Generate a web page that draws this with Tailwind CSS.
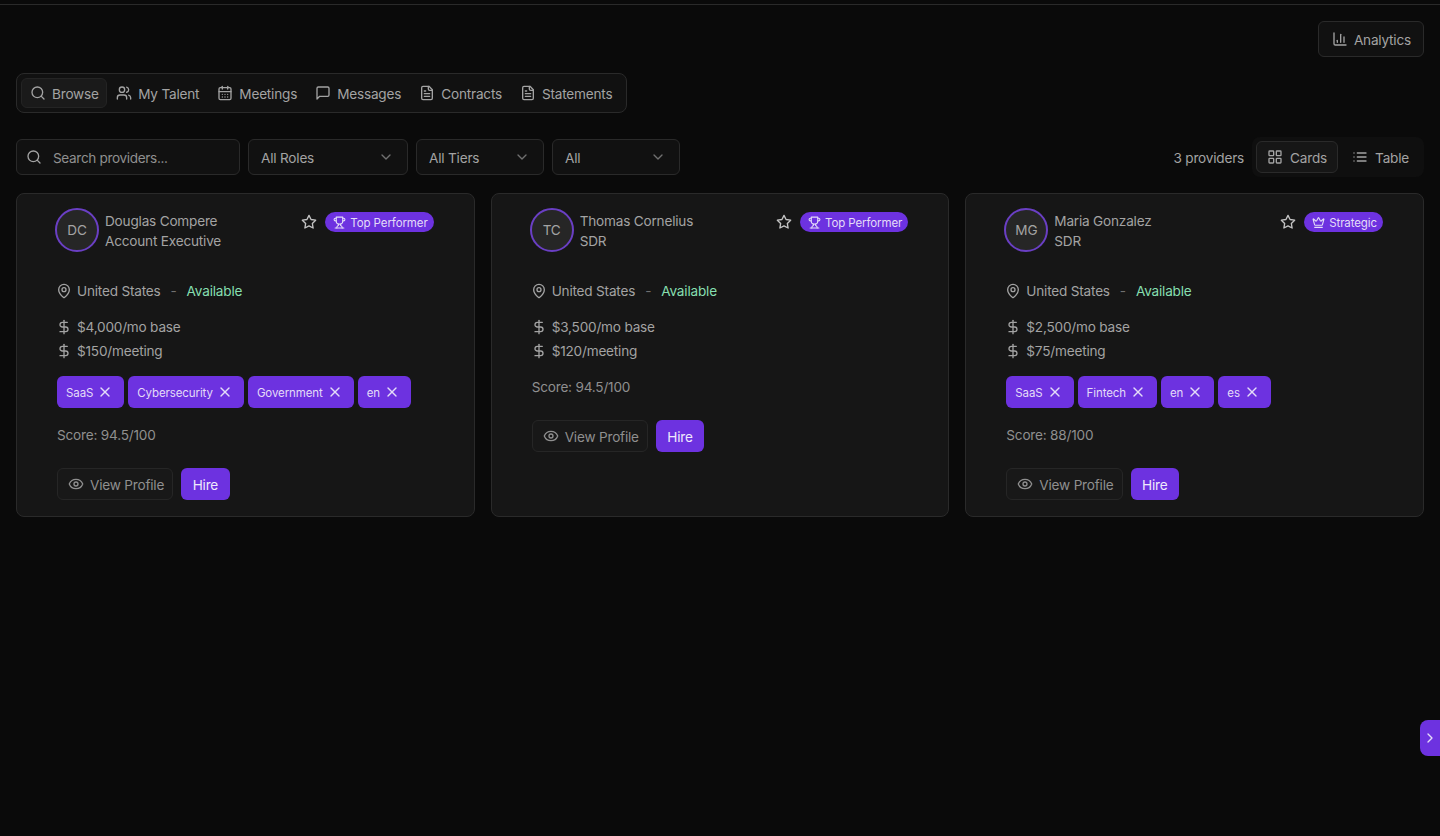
<!DOCTYPE html>
<html lang="en">
  <head>
    <meta charset="UTF-8" />
    <meta name="viewport" content="width=device-width, initial-scale=1.0" />
    <title>Browse providers</title>
    <script src="https://cdn.jsdelivr.net/npm/@tailwindcss/browser@4"></script>
  </head>
  <body class="bg-[#0a0a0a] min-h-screen overflow-hidden font-['Inter',sans-serif] text-[13.6px] tracking-[-0.2px] text-[#a3a3a3]">
    <div id="app"></div>

    <script>
      // Lucide icon bodies
      const icons = {
        search: '<circle cx="11" cy="11" r="8"/><path d="m21 21-4.3-4.3"/>',
        users: '<path d="M16 21v-2a4 4 0 0 0-4-4H6a4 4 0 0 0-4 4v2"/><circle cx="9" cy="7" r="4"/><path d="M22 21v-2a4 4 0 0 0-3-3.87"/><path d="M16 3.13a4 4 0 0 1 0 7.75"/>',
        calendar: '<path d="M8 2v4"/><path d="M16 2v4"/><rect width="18" height="18" x="3" y="4" rx="2"/><path d="M3 10h18"/><path d="M8 14h.01"/><path d="M12 14h.01"/><path d="M16 14h.01"/><path d="M8 18h.01"/><path d="M12 18h.01"/><path d="M16 18h.01"/>',
        message: '<path d="M21 15a2 2 0 0 1-2 2H7l-4 4V5a2 2 0 0 1 2-2h14a2 2 0 0 1 2 2z"/>',
        file: '<path d="M15 2H6a2 2 0 0 0-2 2v16a2 2 0 0 0 2 2h12a2 2 0 0 0 2-2V7Z"/><path d="M14 2v4a2 2 0 0 0 2 2h4"/><path d="M10 9H8"/><path d="M16 13H8"/><path d="M16 17H8"/>',
        chart: '<path d="M3 3v16a2 2 0 0 0 2 2h16"/><path d="M18 17V9"/><path d="M13 17V5"/><path d="M8 17v-3"/>',
        grid: '<rect width="7" height="7" x="3" y="3" rx="1"/><rect width="7" height="7" x="14" y="3" rx="1"/><rect width="7" height="7" x="14" y="14" rx="1"/><rect width="7" height="7" x="3" y="14" rx="1"/>',
        list: '<path d="M3 12h.01"/><path d="M3 18h.01"/><path d="M3 6h.01"/><path d="M8 12h13"/><path d="M8 18h13"/><path d="M8 6h13"/>',
        chevronDown: '<path d="m6 9 6 6 6-6"/>',
        chevronRight: '<path d="m9 18 6-6-6-6"/>',
        star: '<polygon points="12 2 15.09 8.26 22 9.27 17 14.14 18.18 21.02 12 17.77 5.82 21.02 7 14.14 2 9.27 8.91 8.26 12 2"/>',
        trophy: '<path d="M6 9H4.5a2.5 2.5 0 0 1 0-5H6"/><path d="M18 9h1.5a2.5 2.5 0 0 0 0-5H18"/><path d="M4 22h16"/><path d="M10 14.66V17c0 .55-.47.98-.97 1.21C7.85 18.75 7 20.24 7 22"/><path d="M14 14.66V17c0 .55.47.98.97 1.21C16.15 18.75 17 20.24 17 22"/><path d="M18 2H6v7a6 6 0 0 0 12 0V2Z"/>',
        crown: '<path d="M11.562 3.266a.5.5 0 0 1 .876 0L15.39 8.87a1 1 0 0 0 1.516.294L21.183 5.5a.5.5 0 0 1 .798.519l-2.834 10.246a1 1 0 0 1-.956.734H5.81a1 1 0 0 1-.957-.734L2.02 6.02a.5.5 0 0 1 .798-.519l4.276 3.664a1 1 0 0 0 1.516-.294z"/><path d="M5 21h14"/>',
        pin: '<path d="M20 10c0 4.993-5.539 10.193-7.399 11.799a1 1 0 0 1-1.202 0C9.539 20.193 4 14.993 4 10a8 8 0 0 1 16 0"/><circle cx="12" cy="10" r="3"/>',
        dollar: '<line x1="12" x2="12" y1="2" y2="22"/><path d="M17 5H9.5a3.5 3.5 0 0 0 0 7h5a3.5 3.5 0 0 1 0 7H6"/>',
        eye: '<path d="M2.062 12.348a1 1 0 0 1 0-.696 10.75 10.75 0 0 1 19.876 0 1 1 0 0 1 0 .696 10.75 10.75 0 0 1-19.876 0"/><circle cx="12" cy="12" r="3"/>',
        x: '<path d="M18 6 6 18"/><path d="m6 6 12 12"/>',
      };

      function icon(name, cls) {
        return `<svg xmlns="http://www.w3.org/2000/svg" viewBox="0 0 24 24" fill="none" stroke="currentColor" stroke-width="2" stroke-linecap="round" stroke-linejoin="round" class="shrink-0 ${cls}">${icons[name]}</svg>`;
      }

      // Mock Data
      const tabs = [
        { label: "Browse", icon: "search", active: true },
        { label: "My Talent", icon: "users" },
        { label: "Meetings", icon: "calendar" },
        { label: "Messages", icon: "message" },
        { label: "Contracts", icon: "file" },
        { label: "Statements", icon: "file" },
      ];

      const providers = [
        {
          initials: "DC",
          name: "Douglas Compere",
          role: "Account Executive",
          tier: "Top Performer",
          tierIcon: "trophy",
          base: "$4,000/mo base",
          meeting: "$150/meeting",
          tags: ["SaaS", "Cybersecurity", "Government", "en"],
          score: "94.5",
        },
        {
          initials: "TC",
          name: "Thomas Cornelius",
          role: "SDR",
          tier: "Top Performer",
          tierIcon: "trophy",
          base: "$3,500/mo base",
          meeting: "$120/meeting",
          tags: [],
          score: "94.5",
        },
        {
          initials: "MG",
          name: "Maria Gonzalez",
          role: "SDR",
          tier: "Strategic",
          tierIcon: "crown",
          base: "$2,500/mo base",
          meeting: "$75/meeting",
          tags: ["SaaS", "Fintech", "en", "es"],
          score: "88",
        },
      ];

      function renderTabs() {
        return `
          <nav class="flex w-fit h-10 items-center gap-[-1px] rounded-lg border border-[#2a2a2a] bg-[#111111] pl-1 pr-[5px]">
            ${tabs
              .map(
                (tab) => `
                <button class="flex h-[30px] items-center gap-[6px] rounded-md border px-2 ${
                  tab.active ? "border-[#242424] bg-[#1a1a1a] pr-[7.5px]" : "border-transparent"
                }">
                  ${icon(tab.icon, "size-4")}
                  <span class="pt-[2px]">${tab.label}</span>
                </button>
              `
              )
              .join("")}
          </nav>
        `;
      }

      function renderFilter(label, width) {
        return `
          <button class="flex h-9 ${width} items-center justify-between rounded-md border border-[#2a2a2a] bg-[#111111] pl-3 pr-[13px]">
            <span class="pt-[2px]">${label}</span>
            ${icon("chevronDown", "size-4 text-[#707070]")}
          </button>
        `;
      }

      function renderToolbar() {
        return `
          <div class="mt-[26px] flex items-center justify-between">
            <div class="flex gap-2">
              <div class="flex h-9 w-56 items-center gap-[11px] rounded-md border border-[#2a2a2a] bg-[#111111] pl-[9px]">
                ${icon("search", "size-4")}
                <span class="pt-[2px] tracking-[-0.35px] text-[#8f8f8f]">Search providers...</span>
              </div>
              ${renderFilter("All Roles", "w-40")}
              ${renderFilter("All Tiers", "w-32")}
              ${renderFilter("All", "w-32")}
            </div>
            <div class="flex items-center gap-2">
              <span class="pt-[2px]">3 providers</span>
              <div class="-my-0.5 flex h-10 items-center rounded-lg bg-[#0f0f0f] px-1">
                <button class="flex h-8 items-center gap-[7px] rounded-md border border-[#2a2a2a] bg-[#161616] px-[10px]">
                  ${icon("grid", "size-4")}<span class="pt-[2px]">Cards</span>
                </button>
                <button class="flex h-8 items-center gap-[7px] pl-[14px] pr-[11px]">
                  ${icon("list", "size-4")}<span class="pt-[2px]">Table</span>
                </button>
              </div>
            </div>
          </div>
        `;
      }

      function renderCard(p) {
        return `
          <div class="rounded-lg border border-[#2a2a2a] bg-[#161616] px-10 pt-[14px] pb-4">
            <div class="flex items-start justify-between">
              <div class="flex items-center gap-[6px]">
                <div class="-ml-[2px] flex size-11 items-center justify-center rounded-full border-2 border-[#6a3fc4] bg-[#262626]">${p.initials}</div>
                <div class="pt-px leading-5">
                  <div>${p.name}</div>
                  <div>${p.role}</div>
                </div>
              </div>
              <div class="mt-1 flex items-center gap-2">
                ${icon("star", "size-4 text-[#c4c4c4]")}
                <span class="flex h-5 items-center gap-1 rounded-full bg-[#6d32e0] pl-2 pr-[6px] text-[11.5px] tracking-[-0.1px] text-[#e4dcf8]">
                  ${icon(p.tierIcon, "size-[13px]")}<span class="pt-[3px]">${p.tier}</span>
                </span>
              </div>
            </div>
            <div class="mt-[29px] flex items-center leading-5">
              ${icon("pin", "size-4 -ml-px mr-[5px]")}
              <span>United States</span>
              <span class="mx-[10px] text-[#707070]">-</span>
              <span class="text-[#86dfb0]">Available</span>
            </div>
            <div class="mt-4 flex flex-col gap-1 leading-5">
              <div class="flex items-center">${icon("dollar", "size-4 -ml-px mr-[5px]")}<span>${p.base}</span></div>
              <div class="flex items-center">${icon("dollar", "size-4 -ml-px mr-[5px]")}<span>${p.meeting}</span></div>
            </div>
            ${
              p.tags.length
                ? `<div class="mt-[15px] flex gap-1">
                    ${p.tags
                      .map(
                        (tag) => `
                        <span class="flex h-8 items-center gap-1 rounded-md bg-[#6d32e0] pl-[9px] pr-[11px] text-[11.5px] tracking-[-0.1px] text-[#e4dcf8]">
                          <span class="pt-1">${tag}</span>${icon("x", "size-4")}
                        </span>
                      `
                      )
                      .join("")}
                  </div>`
                : ""
            }
            <div class="${p.tags.length ? "mt-[17px]" : "mt-4"} leading-5 text-[#8f8f8f]">Score: ${p.score}/100</div>
            <div class="mt-[23px] flex gap-2">
              <button class="flex h-8 items-center gap-[6px] rounded-md border border-[#262626] bg-[#181818] pl-[10px] pr-2 text-[#8f8f8f]">
                ${icon("eye", "size-4")}<span class="pt-[2px]">View Profile</span>
              </button>
              <button class="h-8 rounded-md bg-[#6d32e0] px-[11.5px] pt-[2px] text-[#efe9fc]">Hire</button>
            </div>
          </div>
        `;
      }

      function renderApp() {
        document.getElementById("app").innerHTML = `
          <div class="h-[5px] border-b border-[#2a2a2a]"></div>
          <main class="px-4 pt-4">
            <div class="flex justify-end">
              <button class="flex h-9 items-center gap-[6px] rounded-md border border-[#2a2a2a] bg-[#111111] pl-[13px] pr-3">
                ${icon("chart", "size-4")}<span class="pt-[2px]">Analytics</span>
              </button>
            </div>
            <div class="mt-4">${renderTabs()}</div>
            ${renderToolbar()}
            <div class="mt-[18px] grid grid-cols-3 gap-4">
              ${providers.map(renderCard).join("")}
            </div>
          </main>
          <button class="absolute right-0 top-[720px] flex h-9 w-5 items-center justify-center rounded-l-lg bg-[#6d32e0] text-[#e4dcf8]">
            ${icon("chevronRight", "size-4")}
          </button>
        `;
      }

      renderApp();
    </script>
  </body>
</html>
